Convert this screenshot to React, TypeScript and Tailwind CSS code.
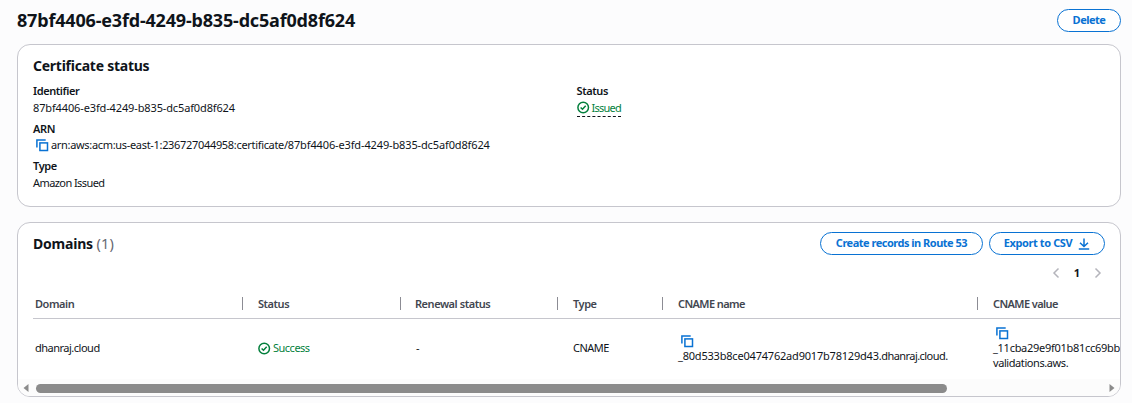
import type { ReactNode } from "react";

function CopyIcon() {
  return (
    <svg width="13" height="13" viewBox="0 0 13 13" fill="none" stroke="#0972d3" strokeWidth="1.5" className="block shrink-0">
      <path d="M0.9 8.5V0.9h8.8" />
      <rect x="3.9" y="3.9" width="7.6" height="7.6" />
    </svg>
  );
}

function CheckIcon() {
  return (
    <svg width="13" height="13" viewBox="0 0 13 13" fill="none" stroke="#037f3c" strokeWidth="1.5" className="block shrink-0">
      <circle cx="6.2" cy="6.5" r="5.3" />
      <path d="M3.6 6.5l1.9 1.8L8.7 4.8" />
    </svg>
  );
}

function Button({ children, className }: { children: ReactNode; className: string }) {
  return (
    <button
      className={`flex h-[23px] items-center justify-center rounded-full border-[1.5px] border-[#0972d3] bg-white pb-px text-[11px] leading-4 font-bold text-[#0972d3] ${className}`}
    >
      {children}
    </button>
  );
}

function Head({ children, className, last }: { children: ReactNode; className: string; last?: boolean }) {
  return (
    <div className={`flex shrink-0 items-center justify-between font-semibold text-[#424650] ${className}`}>
      <span>{children}</span>
      {!last && <span className="h-[13px] w-px bg-[#8c8c94]" />}
    </div>
  );
}

export default function App() {
  return (
    <div className="h-[403px] w-[1132px] overflow-hidden bg-[#fcfcfd] pr-[11px] pl-[17px] font-['Noto_Sans',sans-serif] text-[11px] leading-4 whitespace-nowrap text-[#0f141a]">
      <header className="flex h-11 items-start justify-between pt-[9px]">
        <h1 className="text-[18px] leading-[22px] font-bold tracking-[-0.18px]">87bf4406-e3fd-4249-b835-dc5af0d8f624</h1>
        <Button className="w-[64px] tracking-[-0.5px]">Delete</Button>
      </header>

      <section className="h-[163px] rounded-[13px] border border-[#c6c6cd] bg-white px-[15px] pt-3">
        <h2 className="text-[14px] leading-[18px] font-bold tracking-[-0.25px]">Certificate status</h2>
        <div className="grid grid-cols-[543.5px_1fr] pt-2">
          <dl>
            <dt className="font-semibold tracking-[-0.4px]">Identifier</dt>
            <dd className="pt-px tracking-[-0.13px]">87bf4406-e3fd-4249-b835-dc5af0d8f624</dd>
            <dt className="pt-[5px] font-semibold tracking-[-0.3px]">ARN</dt>
            <dd className="flex items-center gap-[2px] pl-[3px]">
              <CopyIcon />
              <span className="tracking-[-0.13px]">
                <span className="tracking-[-0.32px]">arn:aws:acm:us-east-1:236727044958:certificate/</span>87bf4406-e3fd-4249-b835-dc5af0d8f624
              </span>
            </dd>
            <dt className="pt-[5px] font-semibold tracking-[-0.4px]">Type</dt>
            <dd className="pt-px tracking-[-0.58px]">Amazon Issued</dd>
          </dl>
          <dl>
            <dt className="font-semibold tracking-[-0.4px]">Status</dt>
            <dd className="inline-flex h-[18px] items-center gap-[2px] border-b border-dashed border-[#0f141a] tracking-[-0.75px] text-[#037f3c]">
              <CheckIcon />
              <span>Issued</span>
            </dd>
          </dl>
        </div>
      </section>

      <section className="mt-[15px] flex h-[175px] flex-col overflow-hidden rounded-[13px] border border-[#c6c6cd] bg-white">
        <div className="flex items-start justify-between px-[15px] pt-[9px]">
          <h2 className="pt-[2px] text-[14px] leading-[18px] font-bold tracking-[-0.2px]">
            Domains <span className="text-[14.5px] font-normal tracking-[0.2px] text-[#656871]">(1)</span>
          </h2>
          <div className="flex gap-[6px]">
            <Button className="w-[163px] tracking-[-0.5px]">Create records in Route 53</Button>
            <Button className="w-[116px] gap-[6px] tracking-[-0.4px]">
              <span>Export to CSV</span>
              <svg width="12" height="12" viewBox="0 0 12 12" fill="none" stroke="#0972d3" strokeWidth="1.5" className="mt-px">
                <path d="M6 0.5v7.7M2 4.8l4 3.7 4-3.7M0.8 11h10.4" />
              </svg>
            </Button>
          </div>
        </div>
        <div className="flex h-[34px] items-center justify-end gap-[14px] pt-[2px] pr-[18px] font-bold">
          <svg width="8" height="12" viewBox="0 0 8 12" fill="none" stroke="#b4b4bb" strokeWidth="1.5"><path d="M6.5 1.5L2 6l4.5 4.5" /></svg>
          <span>1</span>
          <svg width="8" height="12" viewBox="0 0 8 12" fill="none" stroke="#b4b4bb" strokeWidth="1.5"><path d="M1.5 1.5L6 6l-4.5 4.5" /></svg>
        </div>
        <div className="ml-[15px] flex h-[30px] shrink-0 border-b border-[#c6c6cd] pl-[2px] tracking-[-0.45px]">
          <Head className="w-[208px]">Domain</Head>
          <Head className="ml-[15px] w-[143px]">Status</Head>
          <Head className="ml-[14px] w-[143px]">Renewal status</Head>
          <Head className="ml-[15px] w-[90px]">Type</Head>
          <Head className="ml-[15px] w-[300px] tracking-[-0.6px]">CNAME name</Head>
          <Head className="ml-[15px] w-[127px] tracking-[-0.6px]" last>CNAME value</Head>
        </div>
        <div className="ml-[15px] flex h-[59px] shrink-0 items-center pl-[2px] tracking-[-0.5px]">
          <div className="w-[223px] shrink-0 pb-px">dhanraj.cloud</div>
          <div className="flex w-[158px] shrink-0 items-center gap-[2px] pb-px">
            <CheckIcon />
            <span className="text-[#037f3c]">Success</span>
          </div>
          <div className="w-[157px] shrink-0 pb-px">-</div>
          <div className="w-[105px] shrink-0 pb-px">CNAME</div>
          <div className="w-[315px] shrink-0 leading-[15px]">
            <div className="pl-[3px]"><CopyIcon /></div>
            <div className="tracking-[-0.2px]">_80d533b8ce0474762ad9017b78129d43<span className="tracking-[-0.55px]">.dhanraj.cloud.</span></div>
          </div>
          <div className="w-[127px] shrink-0 leading-[15px]">
            <div className="pl-[3px]"><CopyIcon /></div>
            <div className="tracking-[-0.28px]">_11cba29e9f01b81cc69bb</div>
            <div className="tracking-[-0.42px]">validations.aws.</div>
          </div>
        </div>
        <div className="mt-auto flex h-[17px] shrink-0 items-center justify-between bg-[#fcfcfc] px-[5px] pt-px">
          <svg width="6" height="8" viewBox="0 0 6 8" fill="#8b8b8b"><path d="M5.5 0v8L0.5 4z" /></svg>
          <div className="mr-auto ml-[7px] h-[9px] w-[911px] rounded-full bg-[#8b8b8b]" />
          <svg width="6" height="8" viewBox="0 0 6 8" fill="#8b8b8b"><path d="M0.5 0v8l5-4z" /></svg>
        </div>
      </section>
    </div>
  );
}
